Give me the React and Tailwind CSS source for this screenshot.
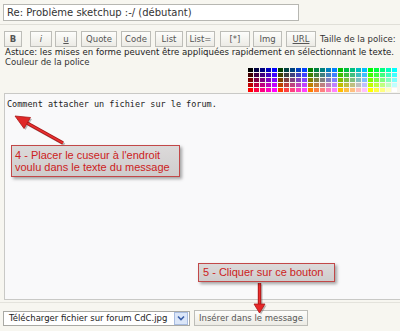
import React from "react";

const levels = ["00", "40", "80", "BF", "FF"];

function Palette() {
  const rows = levels.map((r) => {
    const cells = [];
    levels.forEach((g) => levels.forEach((b) => cells.push("#" + r + g + b)));
    return cells;
  });
  return (
    <div className="grid grid-cols-[repeat(25,5px)] gap-px p-px">
      {rows.flat().map((c, i) => (
        <div key={i} className="h-[4px]" style={{ backgroundColor: c }} />
      ))}
    </div>
  );
}

function Btn({ children, className = "" }) {
  return (
    <div
      className={
        "h-[16px] flex items-center justify-center border border-[#bdbdb8] bg-gradient-to-b from-[#fdfdfb] to-[#ecebe5] text-[8.5px] text-[#555] " +
        className
      }
    >
      {children}
    </div>
  );
}

export default function App() {
  return (
    <div
      className="relative w-[400px] h-[331px] overflow-hidden bg-[#f7f6f0] text-[#333]"
      style={{ fontFamily: '"DejaVu Sans", Verdana, sans-serif' }}
    >
      <div className="pt-[4px] pl-[3px]">
        <div className="w-[296px] h-[17px] border border-[#b7b7b2] bg-white pl-[3px] text-[10px] leading-[15px] text-[#333]">
          Re: Problème sketchup :-/ (débutant)
        </div>
      </div>
      <div className="mt-[3px] h-px bg-[#e0dfd8]" />

      <div className="mt-[6px] flex items-center">
        <Btn className="ml-[4px] w-[18px] font-bold text-[#333]">B</Btn>
        <Btn className="ml-[8px] w-[22px] italic">i</Btn>
        <Btn className="ml-[3px] w-[22px] underline">u</Btn>
        <Btn className="ml-[4px] w-[36px]">Quote</Btn>
        <Btn className="ml-[4px] w-[30px]">Code</Btn>
        <Btn className="ml-[4px] w-[28px]">List</Btn>
        <Btn className="ml-[3px] w-[29px]">List=</Btn>
        <Btn className="ml-[5px] w-[30px]">[*]</Btn>
        <Btn className="ml-[3px] w-[29px]">Img</Btn>
        <Btn className="ml-[4px] w-[30px] underline">URL</Btn>
        <span className="ml-[4px] text-[8.5px] whitespace-nowrap text-[#333]">Taille de la police:</span>
      </div>

      <div className="pl-[5px] text-[8.6px] leading-[10px] whitespace-nowrap text-[#222]">
        Astuce: les mises en forme peuvent être appliquées rapidement en sélectionnant le texte.
      </div>
      <div className="pl-[5px] text-[8.5px] leading-[10px] text-[#333]">Couleur de la police</div>
      <div className="flex justify-end pr-[2px]">
        <Palette />
      </div>

      <div className="ml-[4px] w-[400px] h-[207px] border border-[#c9c9c6] bg-[#f9f9fa] pl-[2px] pt-[5px]">
        <div
          className="text-[8.5px] leading-[11px] text-[#222]"
          style={{ fontFamily: '"DejaVu Sans Mono", monospace' }}
        >
          Comment attacher un fichier sur le forum.
        </div>
      </div>
      <div className="mt-[2px] h-px bg-[#e4e3dc]" />

      <div className="mt-[7px] flex items-center">
        <div className="ml-[3px] w-[187px] h-[15px] flex items-center border border-[#a9a9a4] bg-white">
          <span className="flex-1 pl-[5px] text-[8.5px] whitespace-nowrap text-[#222]">
            Télécharger fichier sur forum CdC.jpg
          </span>
          <div className="w-[14px] h-[13px] mr-px flex items-center justify-center border border-[#a8bce0] bg-[#dbe6f8]">
            <svg width="8" height="6" viewBox="0 0 8 6">
              <path d="M1 1.5 L4 4.5 L7 1.5" fill="none" stroke="#3a5fa8" strokeWidth="1.6" />
            </svg>
          </div>
        </div>
        <Btn className="ml-[4px] w-[114px] h-[15px] text-[#333]">Insérer dans le message</Btn>
      </div>

      {/* annotations */}
      <svg className="absolute left-0 top-0" width="400" height="331" viewBox="0 0 400 331">
        <g transform="translate(1.5,1.5)" opacity="0.35">
          <line x1="63" y1="143" x2="27" y2="123" stroke="#444" strokeWidth="3" />
          <polygon points="15,116 30.5,117.5 24,128.5" fill="#444" />
          <line x1="259.5" y1="283" x2="259.5" y2="305" stroke="#444" strokeWidth="3" />
          <polygon points="254,304 265,304 259.5,313" fill="#444" />
        </g>
        <line x1="63" y1="143" x2="27" y2="123" stroke="#a81818" strokeWidth="3.4" />
        <line x1="63" y1="143" x2="27" y2="123" stroke="#e83030" strokeWidth="1.6" />
        <polygon points="15,116 30.5,117.5 24,128.5" fill="#e02828" stroke="#a81818" strokeWidth="0.8" />
        <line x1="259.5" y1="283" x2="259.5" y2="305" stroke="#a81818" strokeWidth="3.4" />
        <line x1="259.5" y1="283" x2="259.5" y2="305" stroke="#ee3030" strokeWidth="1.6" />
        <polygon points="254,304 265,304 259.5,313" fill="#e82828" stroke="#a81818" strokeWidth="0.8" />
      </svg>

      <div
        className="absolute left-[11px] top-[145px] w-[169px] h-[32px] border border-[#c24848] bg-gradient-to-b from-[#dcdada] to-[#cfcccc] shadow-[2px_2px_3px_rgba(0,0,0,0.35)] pl-[3px] pt-[3px] text-[11px] leading-[12px] text-[#cc2222]"
        style={{ fontFamily: '"Liberation Sans", Arial, sans-serif' }}
      >
        4 - Placer le cuseur à l'endroit
        <br />
        voulu dans le texte du message
      </div>
      <div
        className="absolute left-[198px] top-[263px] w-[137px] h-[19px] border border-[#c24848] bg-gradient-to-b from-[#dcdada] to-[#cfcccc] shadow-[2px_2px_3px_rgba(0,0,0,0.35)] pl-[4px] text-[11px] leading-[17px] text-[#cc2222]"
        style={{ fontFamily: '"Liberation Sans", Arial, sans-serif' }}
      >
        5 - Cliquer sur ce bouton
      </div>
    </div>
  );
}
